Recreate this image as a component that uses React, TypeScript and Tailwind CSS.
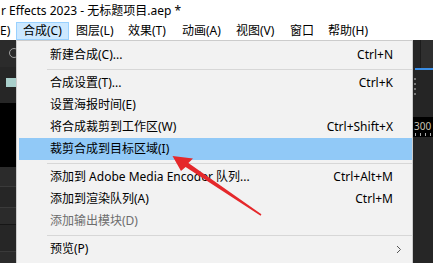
export default function App() {
  const menus = [
    { label: '图层(L)', w: 'w-[52px]' },
    { label: '效果(T)', w: 'w-[54px]' },
    { label: '动画(A)', w: 'w-[54px]' },
    { label: '视图(V)', w: 'w-[54px]' },
    { label: '窗口', w: 'w-[38px]' },
    { label: '帮助(H)', w: 'w-[60px]' },
  ]

  const groups = [
    [{ label: '新建合成(C)...', key: 'Ctrl+N' }],
    [
      { label: '合成设置(T)...', key: 'Ctrl+K' },
      { label: '设置海报时间(E)', key: '' },
      { label: '将合成裁剪到工作区(W)', key: 'Ctrl+Shift+X' },
      { label: '裁剪合成到目标区域(I)', key: '', active: true },
    ],
    [
      { label: '添加到 Adobe Media Encoder 队列...', key: 'Ctrl+Alt+M' },
      { label: '添加到渲染队列(A)', key: 'Ctrl+M' },
      { label: '添加输出模块(D)', key: '', disabled: true },
    ],
    [{ label: '预览(P)', key: '', sub: true }],
  ]

  return (
    <div
      className="relative w-[433px] h-[263px] overflow-hidden bg-[#232323] text-[12px] text-black"
      style={{ fontFamily: '"Noto Sans", "Noto Sans CJK SC", sans-serif' }}
    >
      {/* title bar */}
      <div className="h-[22px] bg-white flex items-center pl-[1px] leading-none">
        r Effects 2023 - 无标题项目.aep *
      </div>

      {/* menu bar */}
      <div className="h-[18px] bg-white flex leading-none">
        <div className="w-[16px] flex items-center">E)</div>
        <div className="w-[53px] flex items-center pl-[6px] bg-[#cce8ff] border border-[#99d1ff]">
          合成(C)
        </div>
        {menus.map((m) => (
          <div key={m.label} className={`${m.w} flex items-center pl-[7px]`}>
            {m.label}
          </div>
        ))}
      </div>

      {/* workspace */}
      <div className="flex h-[223px]">
        {/* left panel strip */}
        <div className="w-[16px] flex flex-col overflow-hidden">
          <div className="h-[27px] bg-[#2b2b2b] pt-[8px] pl-[9px]">
            <div className="w-[10px] h-[10px] rounded-full border border-[#a0a0a0]" />
          </div>
          <div className="h-[36px] bg-[#262626] pt-[11px] pl-[6px]">
            <div className="w-[10px] h-[9px] bg-[#a9cfcb]" />
          </div>
          <div className="h-[64px] bg-black" />
          <div className="h-[20px] bg-[#2b2b2b] border-b border-[#3a3a3a]" />
          <div className="h-[21px] bg-[#262626] border-b border-[#3a3a3a]" />
          <div className="h-[17px] bg-[#2b2b2b] border-b border-[#161616]" />
          <div className="h-[27px] bg-[#262626] border-b border-[#3a3a3a]" />
          <div className="flex-1 bg-[#2b2b2b]" />
        </div>

        {/* dropdown */}
        <div className="w-[397px] bg-[#f2f2f2] border-l border-t border-r border-[#cccccc] pt-[3px] pl-[2px]">
          {groups.map((g, gi) => (
            <div key={gi}>
              {gi > 0 && (
                <div className="h-[6px] flex items-center pl-[28px]">
                  <div className="h-px w-full bg-[#d7d7d7]" />
                </div>
              )}
              {g.map((it) => (
                <div
                  key={it.label}
                  className={`h-[22px] flex items-center justify-between pl-[31px] pr-[19px] leading-none ${
                    it.active ? 'bg-[#91c9f7]' : ''
                  } ${it.disabled ? 'text-[#6d6d6d]' : 'text-black'}`}
                >
                  <span>{it.label}</span>
                  {it.sub ? (
                    <svg width="6" height="9" viewBox="0 0 6 9" className="mr-[-9px]">
                      <path d="M1 1 L4.5 4.5 L1 8" fill="none" stroke="#555" strokeWidth="1" />
                    </svg>
                  ) : (
                    <span>{it.key}</span>
                  )}
                </div>
              ))}
            </div>
          ))}
        </div>

        {/* right panel strip */}
        <div className="w-[20px] flex flex-col overflow-hidden">
          <div className="h-[28px] bg-[#2f2f2f] flex">
            <div className="w-[7px] bg-[#262626]" />
            <div className="w-px bg-[#1c1c1c]" />
            <div className="flex-1" />
          </div>
          <div className="h-[2px] flex bg-[#2a2a2a]">
            <div className="w-[2px]" />
            <div className="flex-1 bg-[#3a8ee6]" />
          </div>
          <div className="h-[47px] bg-[#252525] pt-[8px] pl-[1px] flex flex-col gap-[3px]">
            <div className="w-[2px] h-[2px] bg-[#777]" />
            <div className="w-[2px] h-[2px] bg-[#777]" />
            <div className="w-[2px] h-[2px] bg-[#777]" />
            <div className="w-[2px] h-[2px] bg-[#777]" />
          </div>
          <div className="h-[20px] bg-black flex flex-col justify-between pt-[4px] pb-[1px]">
            <div className="text-[10px] leading-none text-[#c9c2b4] pl-[1px]">300</div>
            <div className="flex gap-[4px] pl-[2px]">
              <div className="w-px h-[3px] bg-[#aaa]" />
              <div className="w-px h-[3px] bg-[#aaa]" />
              <div className="w-px h-[3px] bg-[#aaa]" />
              <div className="w-px h-[3px] bg-[#aaa]" />
            </div>
          </div>
          <div className="flex-1 bg-[#262626]" />
        </div>
      </div>

      {/* red annotation arrow */}
      <svg className="absolute left-0 top-0 pointer-events-none" width="433" height="263">
        <polygon
          points="172.5,156 193,158.5 188.4,162.9 261.4,214.3 260.6,215.7 185.6,167.1 181,171"
          fill="#e5282b"
        />
      </svg>
    </div>
  )
}
